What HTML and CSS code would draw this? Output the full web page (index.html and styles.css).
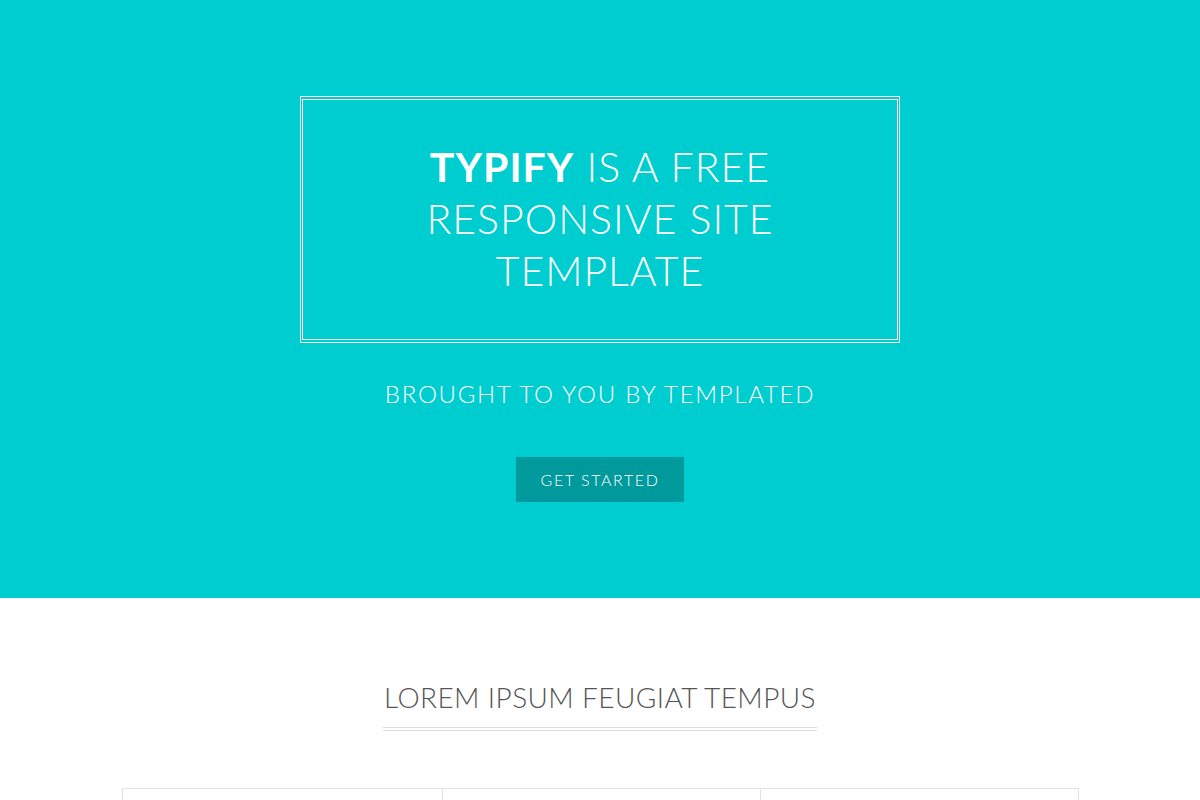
FILE: index.html
```html
<!DOCTYPE html>
<html lang="en">
<head>
<meta charset="utf-8">
<title>Typify</title>
<link rel="stylesheet" href="styles.css">
</head>
<body>
<section class="hero">
  <div class="frame">
    <div class="frame-inner">
      <h1 class="hero-title"><strong>TYPIFY</strong> IS A FREE<br>RESPONSIVE SITE<br>TEMPLATE</h1>
    </div>
  </div>
  <p class="hero-sub">BROUGHT TO YOU BY TEMPLATED</p>
  <a class="btn" href="#">GET STARTED</a>
</section>
<section class="main">
  <header class="main-head">
    <h2 class="main-title">LOREM IPSUM FEUGIAT TEMPUS</h2>
  </header>
  <div class="cols">
    <div class="col"></div>
    <div class="col"></div>
    <div class="col"></div>
  </div>
</section>
</body>
</html>
```
FILE: styles.css
```css
html, body {
  margin: 0;
  padding: 0;
}
body {
  font-family: "Lato", "Open Sans", sans-serif;
  background: #fff;
  overflow: hidden;
}
.hero {
  background: #00cdd0;
  height: 598px;
  box-sizing: border-box;
  padding-top: 96px;
  display: flex;
  flex-direction: column;
  align-items: center;
  color: #fff;
}
.frame {
  width: 600px;
  box-sizing: border-box;
  border: 1px solid #fff;
  padding: 2px 1px;
}
.frame-inner {
  border: 1px solid #fff;
  height: 241px;
  box-sizing: border-box;
  display: flex;
  align-items: center;
  justify-content: center;
  padding-bottom: 2px;
}
.hero-title {
  margin: 0;
  font-weight: 300;
  font-size: 41px;
  line-height: 52px;
  letter-spacing: 1px;
  text-align: center;
}
.hero-title strong {
  font-weight: 700;
}
.hero-sub {
  margin: 36px 0 0;
  font-size: 24px;
  font-weight: 300;
  letter-spacing: 1.7px;
  line-height: 30px;
}
.btn {
  margin-top: 48px;
  width: 168px;
  height: 45px;
  display: flex;
  align-items: center;
  justify-content: center;
  background: #009a9c;
  color: #fff;
  text-decoration: none;
  font-size: 16px;
  font-weight: 300;
  letter-spacing: 1.6px;
}
.main {
  display: flex;
  flex-direction: column;
  align-items: center;
  padding-top: 81px;
}
.main-head {
  border-bottom: 4px double #ddd;
  padding: 0 1px 12px;
}
.main-title {
  margin: 0;
  font-weight: 300;
  font-size: 28px;
  line-height: 36px;
  letter-spacing: 0.4px;
  color: #555;
}
.cols {
  margin-top: 57px;
  width: 957px;
  display: grid;
  grid-template-columns: 319px 318px 320px;
  border: 1px solid #e2e2e2;
  border-bottom: none;
  height: 60px;
  box-sizing: border-box;
}
.col + .col {
  border-left: 1px solid #e2e2e2;
}
```
